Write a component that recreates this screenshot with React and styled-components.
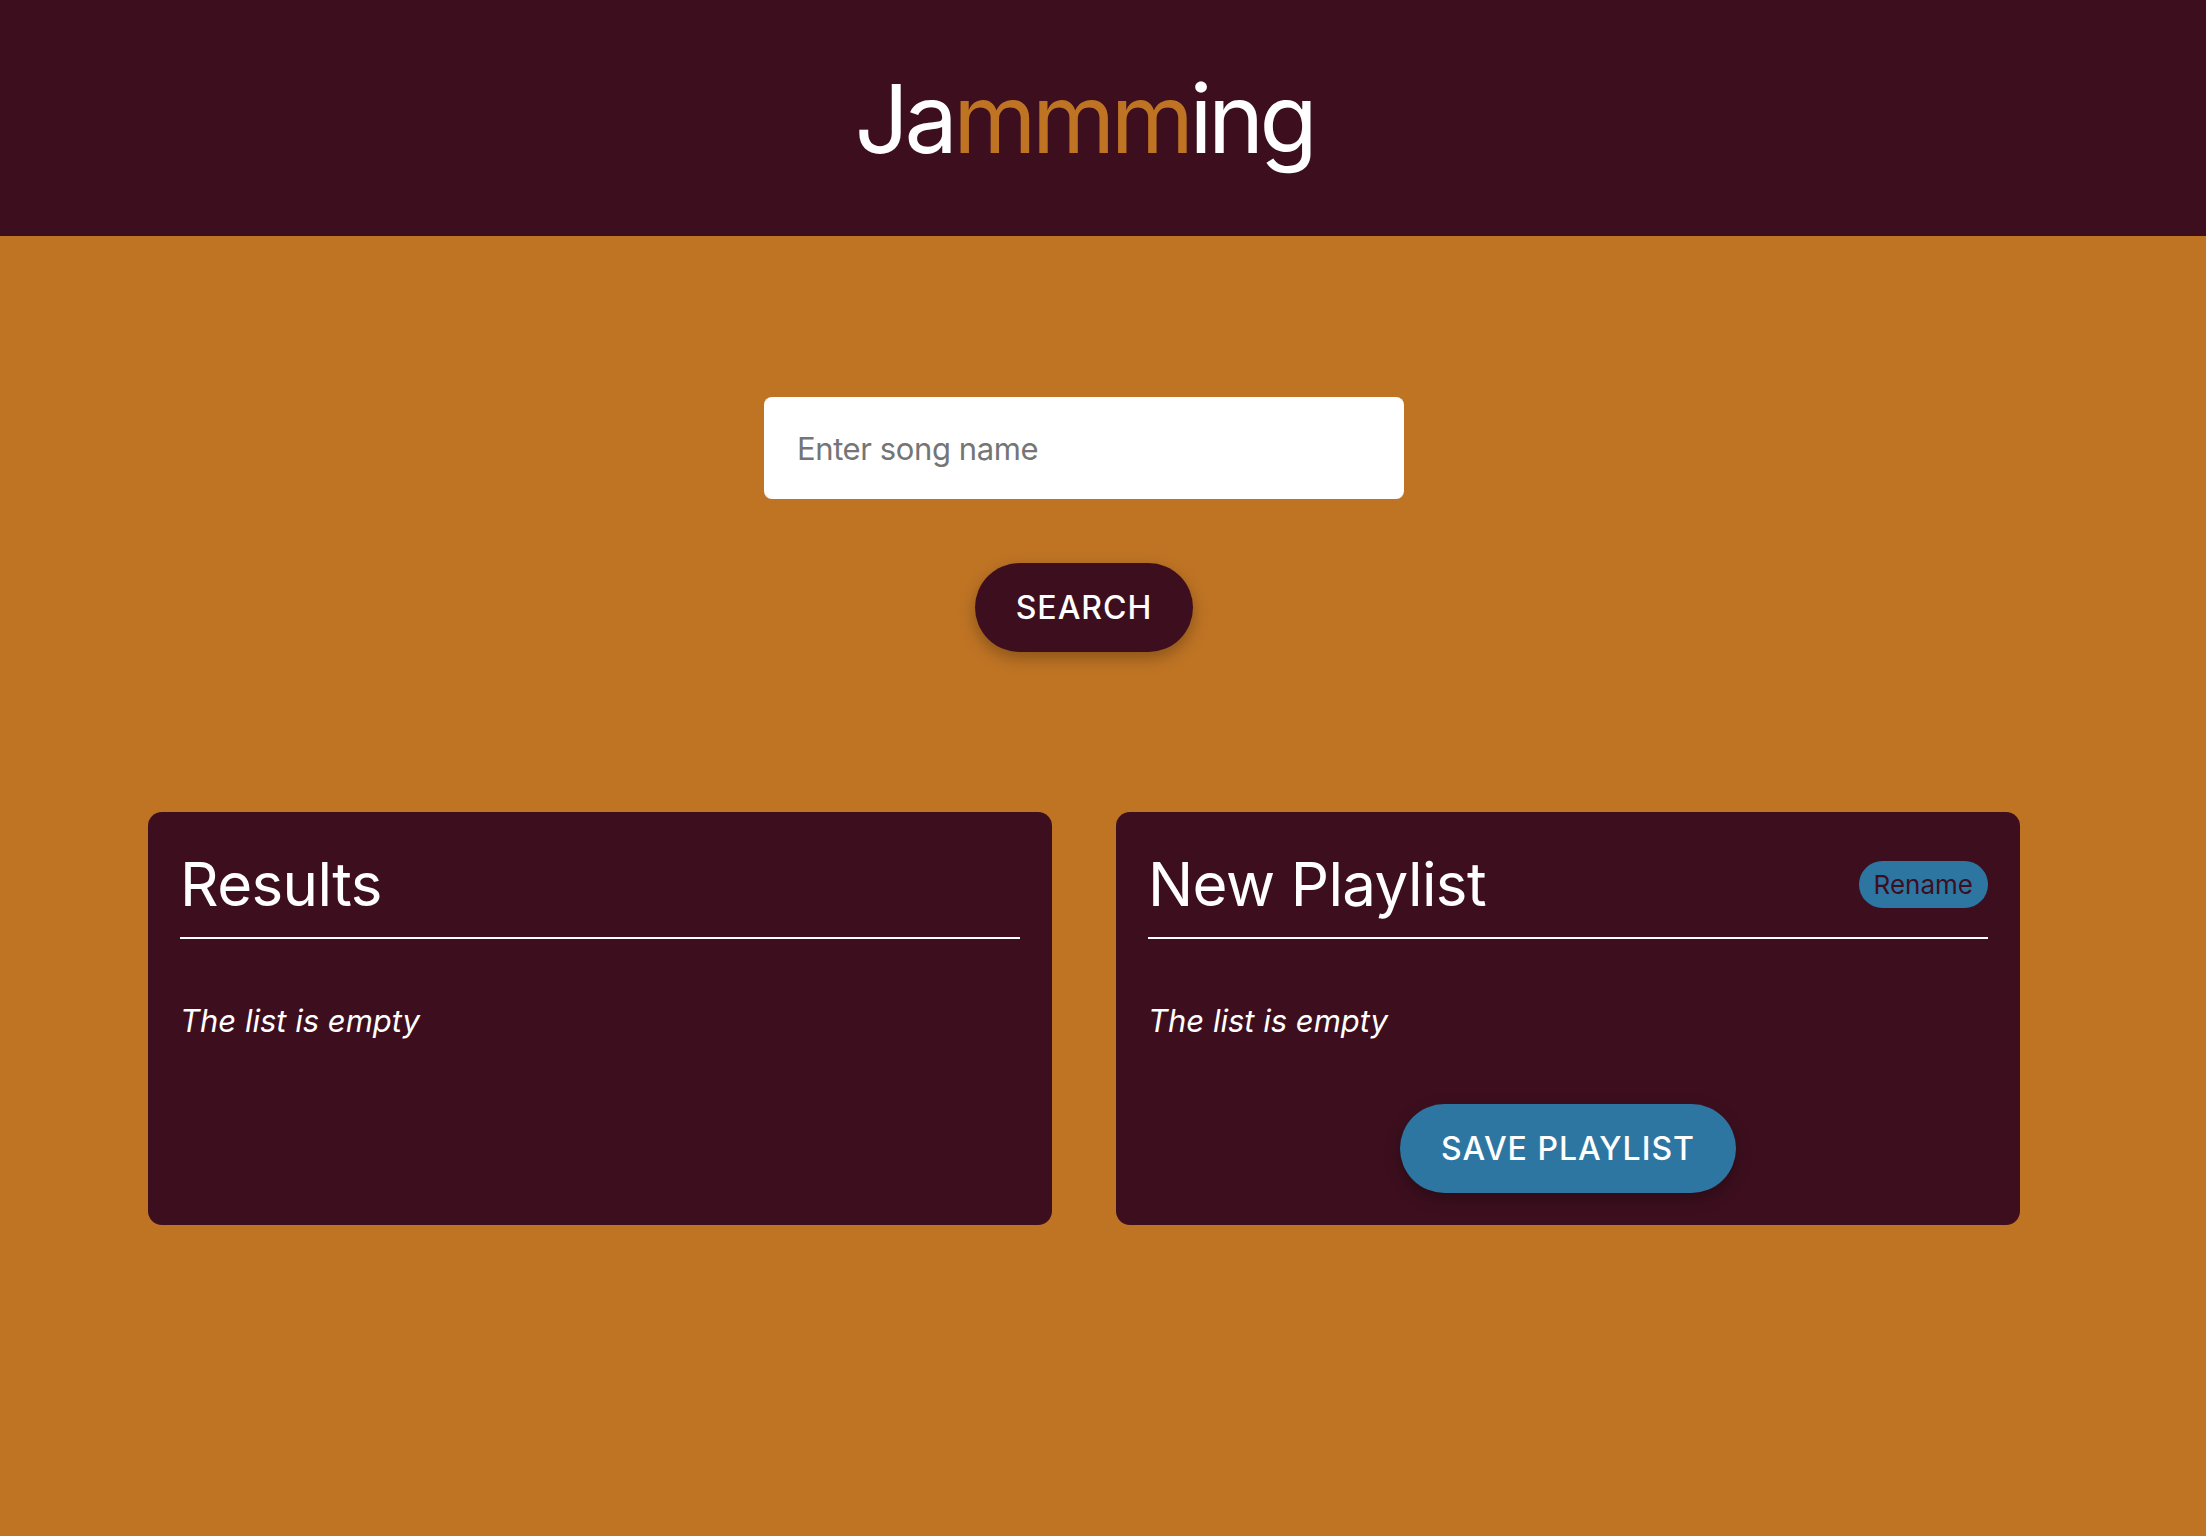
import styled, { createGlobalStyle } from "styled-components";
import { useState } from "react";

const GlobalStyle = createGlobalStyle`
  * {
    box-sizing: border-box;
  }
  body {
    margin: 0;
    background-color: #bf7424;
    font-family: Inter, "Noto Sans", sans-serif;
    min-height: 100vh;
  }
`;

const Header = styled.header`
  background-color: #3d0f1e;
  height: 236px;
  display: flex;
  align-items: center;
  justify-content: center;
  padding-right: 38px;
`;

const Logo = styled.h1`
  margin: 0;
  font-size: 95px;
  font-weight: 400;
  color: #ffffff;
  letter-spacing: -4.5px;
`;

const Highlight = styled.span`
  color: #bf7424;
`;

const Main = styled.main`
  padding: 161px 186px 80px 148px;
  display: flex;
  flex-direction: column;
  align-items: center;
`;

const SearchForm = styled.form`
  display: flex;
  flex-direction: column;
  align-items: center;
  gap: 64px;
`;

const Input = styled.input`
  width: 640px;
  height: 102px;
  border: none;
  border-radius: 8px;
  padding: 0 33px;
  font-family: inherit;
  font-size: 31px;
  letter-spacing: -0.4px;
  color: #222;
  background: #ffffff;
  outline: none;

  &::placeholder {
    color: #757575;
  }
`;

const PillButton = styled.button`
  border: none;
  border-radius: 999px;
  padding: 25px 41px;
  font-family: inherit;
  font-size: 32px;
  font-weight: 500;
  letter-spacing: 1px;
  line-height: 39px;
  color: #ffffff;
  background-color: ${(p) => (p.$variant === "blue" ? "#2e76a2" : "#3d0f1e")};
  box-shadow: 0 6px 16px rgba(0, 0, 0, 0.28);
  cursor: pointer;
`;

const Lists = styled.section`
  width: 100%;
  margin-top: 160px;
  display: grid;
  grid-template-columns: 1fr 1fr;
  gap: 64px;
`;

const Card = styled.div`
  background-color: #3d0f1e;
  border-radius: 14px;
  padding: 36px 32px 32px;
  display: flex;
  flex-direction: column;
  color: #ffffff;
`;

const CardHead = styled.div`
  display: flex;
  align-items: center;
  justify-content: space-between;
  padding-bottom: 16px;
  border-bottom: 2px solid #ffffff;
`;

const CardTitle = styled.h2`
  margin: 0;
  font-size: 60px;
  font-weight: 400;
  line-height: 73px;
  letter-spacing: -0.6px;
`;

const RenameButton = styled.button`
  border: none;
  border-radius: 999px;
  padding: 0 15px;
  height: 47px;
  font-family: inherit;
  font-size: 26px;
  font-weight: 400;
  color: #3d0f1e;
  background-color: #2e76a2;
  cursor: pointer;
`;

const Empty = styled.p`
  margin: 64px 0 0;
  font-size: 31px;
  font-style: italic;
  line-height: 36px;
`;

const Footer = styled.div`
  display: flex;
  justify-content: center;
  margin-top: 65px;
`;

const App = () => {
  const [term, setTerm] = useState("");

  return (
    <>
      <GlobalStyle />
      <Header>
        <Logo>
          Ja<Highlight>mmm</Highlight>ing
        </Logo>
      </Header>
      <Main>
        <SearchForm onSubmit={(e) => e.preventDefault()}>
          <Input
            placeholder="Enter song name"
            value={term}
            onChange={(e) => setTerm(e.target.value)}
          />
          <PillButton type="submit">SEARCH</PillButton>
        </SearchForm>
        <Lists>
          <Card>
            <CardHead>
              <CardTitle>Results</CardTitle>
            </CardHead>
            <Empty>The list is empty</Empty>
          </Card>
          <Card>
            <CardHead>
              <CardTitle>New Playlist</CardTitle>
              <RenameButton>Rename</RenameButton>
            </CardHead>
            <Empty>The list is empty</Empty>
            <Footer>
              <PillButton $variant="blue">SAVE PLAYLIST</PillButton>
            </Footer>
          </Card>
        </Lists>
      </Main>
    </>
  );
};

export default App;
